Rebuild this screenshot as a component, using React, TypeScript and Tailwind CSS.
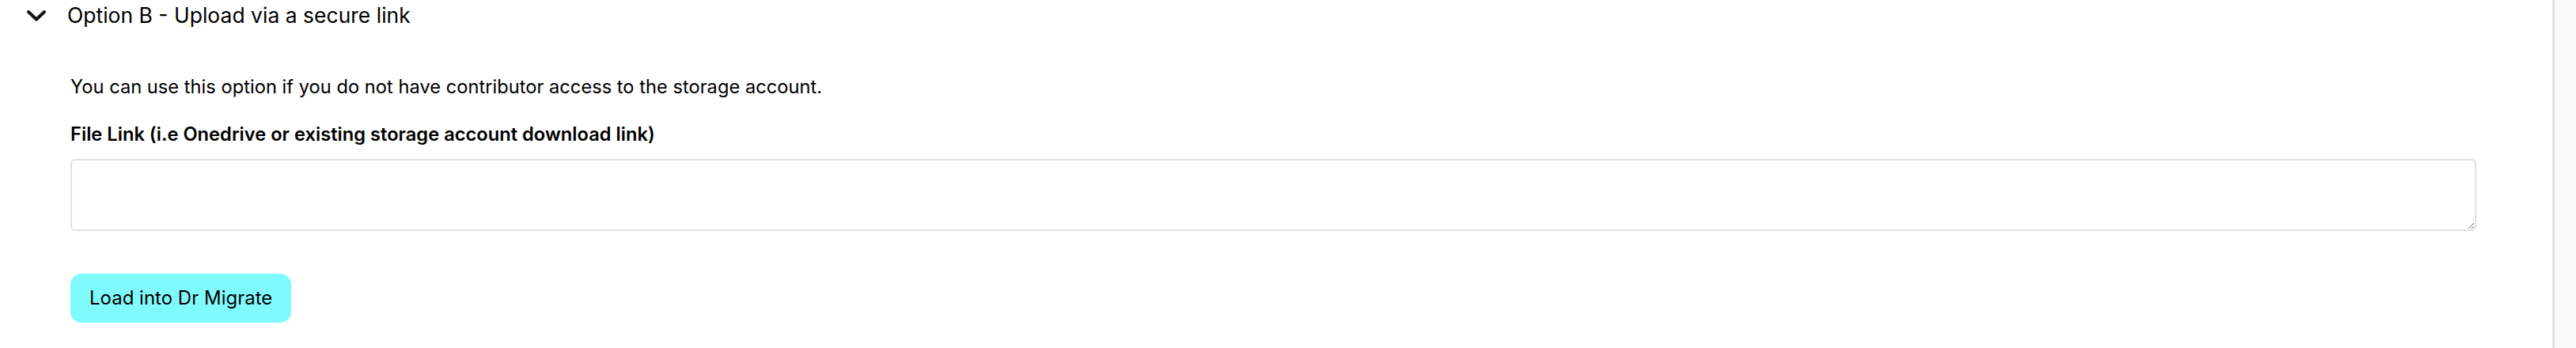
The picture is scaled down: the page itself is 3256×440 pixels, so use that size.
import { useState } from "react";

export default function App() {
    const [link, setLink] = useState("");

    return (
        <div
            className="flex h-[440px] w-full bg-white text-black"
            style={{ fontFamily: "Inter, 'Noto Sans', sans-serif" }}
        >
            <div className="flex-1 min-w-0">
                {/* Accordion header */}
                <div className="flex h-[38px] items-center pl-[33px]">
                    <svg width="26" height="17" viewBox="0 0 26 17" fill="none" className="shrink-0">
                        <path d="M3 4 L13 13.5 L23 4" stroke="#111" strokeWidth="4" strokeLinecap="round" strokeLinejoin="round" />
                    </svg>
                    <span className="ml-[26px] text-[26.5px] leading-[38px]">Option B - Upload via a secure link</span>
                </div>

                {/* Accordion body */}
                <div className="pl-[89px] pr-[96px] pt-[54px]">
                    <p className="text-[23.7px] leading-[36px]">
                        You can use this option if you do not have contributor access to the storage account.
                    </p>
                    <label className="mt-[24px] block text-[23.7px] font-semibold leading-[36px]">
                        File Link (i.e Onedrive or existing storage account download link)
                    </label>
                    <textarea
                        value={link}
                        onChange={(e) => setLink(e.target.value)}
                        className="mt-[13px] block h-[91px] w-full rounded-[6px] border-2 border-[#dfe1e4] bg-white px-3 py-2 text-[24px] outline-none"
                    />
                    <button className="mt-[54px] h-[62px] rounded-[14px] bg-[#80fbfd] px-[24px] text-[24px] leading-none text-black">
                        Load into Dr Migrate
                    </button>
                </div>
            </div>

            {/* scrollbar track */}
            <div className="w-[30px] shrink-0 border-l-[3px] border-[#e4e4e7] bg-[#fafafa]" />
        </div>
    );
}
